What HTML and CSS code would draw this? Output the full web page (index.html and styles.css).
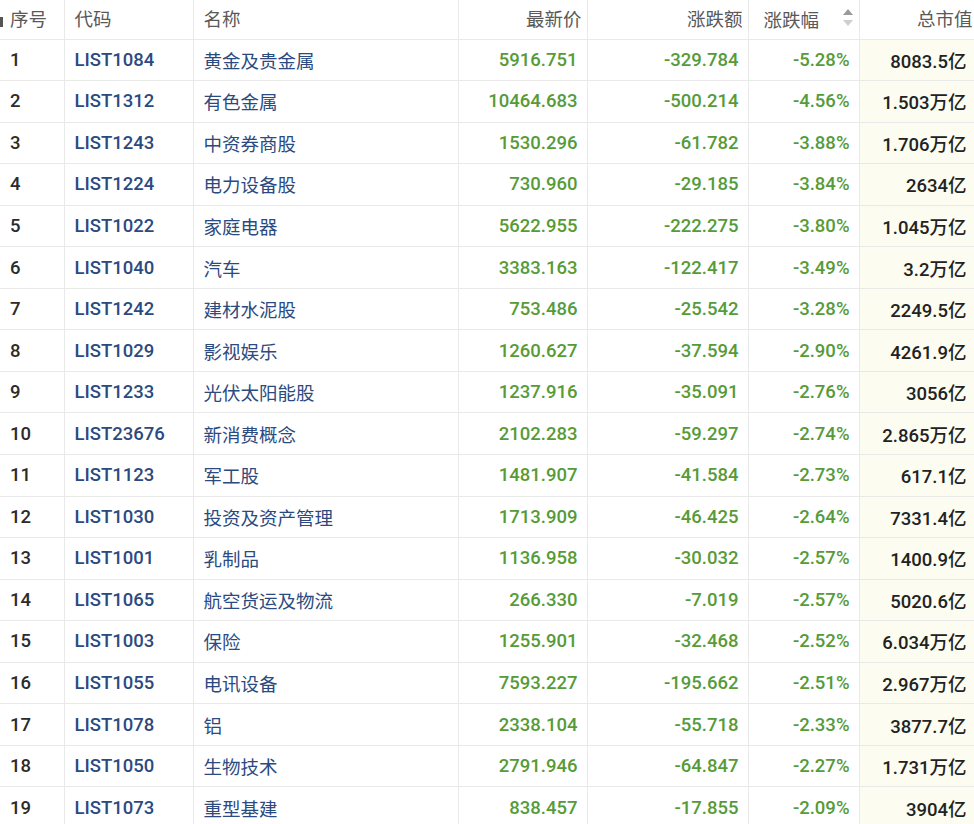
FILE: index.html
```html
<!DOCTYPE html>
<html lang="zh">
<head>
<meta charset="utf-8">
<title>板块行情</title>
<link rel="stylesheet" href="styles.css">
</head>
<body>
<div class="wrap">
<table class="quotes">
<colgroup>
<col class="c-idx"><col class="c-code"><col class="c-name"><col class="c-price"><col class="c-chg"><col class="c-pct"><col class="c-cap">
</colgroup>
<thead>
<tr>
<th class="idx"><span class="cut"></span>序号</th>
<th class="left">代码</th>
<th class="left">名称</th>
<th class="right">最新价</th>
<th class="right">涨跌额</th>
<th class="sortable"><span class="lbl">涨跌幅</span><span class="sort"><i class="up"></i><i class="down"></i></span></th>
<th class="right cap-h">总市值</th>
</tr>
</thead>
<tbody>
<tr><td class="idx">1</td><td class="code">LIST1084</td><td class="name">黄金及贵金属</td><td class="num">5916.751</td><td class="num">-329.784</td><td class="num">-5.28%</td><td class="cap">8083.5亿</td></tr>
<tr><td class="idx">2</td><td class="code">LIST1312</td><td class="name">有色金属</td><td class="num">10464.683</td><td class="num">-500.214</td><td class="num">-4.56%</td><td class="cap">1.503万亿</td></tr>
<tr><td class="idx">3</td><td class="code">LIST1243</td><td class="name">中资券商股</td><td class="num">1530.296</td><td class="num">-61.782</td><td class="num">-3.88%</td><td class="cap">1.706万亿</td></tr>
<tr><td class="idx">4</td><td class="code">LIST1224</td><td class="name">电力设备股</td><td class="num">730.960</td><td class="num">-29.185</td><td class="num">-3.84%</td><td class="cap">2634亿</td></tr>
<tr><td class="idx">5</td><td class="code">LIST1022</td><td class="name">家庭电器</td><td class="num">5622.955</td><td class="num">-222.275</td><td class="num">-3.80%</td><td class="cap">1.045万亿</td></tr>
<tr><td class="idx">6</td><td class="code">LIST1040</td><td class="name">汽车</td><td class="num">3383.163</td><td class="num">-122.417</td><td class="num">-3.49%</td><td class="cap">3.2万亿</td></tr>
<tr><td class="idx">7</td><td class="code">LIST1242</td><td class="name">建材水泥股</td><td class="num">753.486</td><td class="num">-25.542</td><td class="num">-3.28%</td><td class="cap">2249.5亿</td></tr>
<tr><td class="idx">8</td><td class="code">LIST1029</td><td class="name">影视娱乐</td><td class="num">1260.627</td><td class="num">-37.594</td><td class="num">-2.90%</td><td class="cap">4261.9亿</td></tr>
<tr><td class="idx">9</td><td class="code">LIST1233</td><td class="name">光伏太阳能股</td><td class="num">1237.916</td><td class="num">-35.091</td><td class="num">-2.76%</td><td class="cap">3056亿</td></tr>
<tr><td class="idx">10</td><td class="code">LIST23676</td><td class="name">新消费概念</td><td class="num">2102.283</td><td class="num">-59.297</td><td class="num">-2.74%</td><td class="cap">2.865万亿</td></tr>
<tr><td class="idx">11</td><td class="code">LIST1123</td><td class="name">军工股</td><td class="num">1481.907</td><td class="num">-41.584</td><td class="num">-2.73%</td><td class="cap">617.1亿</td></tr>
<tr><td class="idx">12</td><td class="code">LIST1030</td><td class="name">投资及资产管理</td><td class="num">1713.909</td><td class="num">-46.425</td><td class="num">-2.64%</td><td class="cap">7331.4亿</td></tr>
<tr><td class="idx">13</td><td class="code">LIST1001</td><td class="name">乳制品</td><td class="num">1136.958</td><td class="num">-30.032</td><td class="num">-2.57%</td><td class="cap">1400.9亿</td></tr>
<tr><td class="idx">14</td><td class="code">LIST1065</td><td class="name">航空货运及物流</td><td class="num">266.330</td><td class="num">-7.019</td><td class="num">-2.57%</td><td class="cap">5020.6亿</td></tr>
<tr><td class="idx">15</td><td class="code">LIST1003</td><td class="name">保险</td><td class="num">1255.901</td><td class="num">-32.468</td><td class="num">-2.52%</td><td class="cap">6.034万亿</td></tr>
<tr><td class="idx">16</td><td class="code">LIST1055</td><td class="name">电讯设备</td><td class="num">7593.227</td><td class="num">-195.662</td><td class="num">-2.51%</td><td class="cap">2.967万亿</td></tr>
<tr><td class="idx">17</td><td class="code">LIST1078</td><td class="name">铝</td><td class="num">2338.104</td><td class="num">-55.718</td><td class="num">-2.33%</td><td class="cap">3877.7亿</td></tr>
<tr><td class="idx">18</td><td class="code">LIST1050</td><td class="name">生物技术</td><td class="num">2791.946</td><td class="num">-64.847</td><td class="num">-2.27%</td><td class="cap">1.731万亿</td></tr>
<tr><td class="idx">19</td><td class="code">LIST1073</td><td class="name">重型基建</td><td class="num">838.457</td><td class="num">-17.855</td><td class="num">-2.09%</td><td class="cap">3904亿</td></tr>
</tbody>
</table>
</div>
</body>
</html>
```
FILE: styles.css
```css
html, body {
  margin: 0;
  padding: 0;
  background: #ffffff;
}
.wrap {
  width: 974px;
  height: 824px;
  overflow: hidden;
}
.quotes {
  border-collapse: collapse;
  table-layout: fixed;
  width: 975px;
  font-family: Roboto, "Noto Sans CJK SC", sans-serif;
  font-size: 18.5px;
}
.c-idx { width: 64px; }
.c-code { width: 129px; }
.c-name { width: 265px; }
.c-price { width: 129px; }
.c-chg { width: 161px; }
.c-pct { width: 111px; }
.c-cap { width: 116px; }

.quotes th, .quotes td {
  border: 1px solid #e9e9e9;
  white-space: nowrap;
  overflow: hidden;
  padding: 0;
}
.quotes tr > :first-child { border-left: none; }
.quotes thead th {
  border-top: none;
  height: 39px;
  font-weight: normal;
  color: #595959;
  font-size: 18.5px;
  padding-bottom: 3px;
  box-sizing: border-box;
  font-family: "Noto Sans CJK SC", sans-serif;
}
.quotes th.left { text-align: left; padding-left: 10px; }
.quotes th.right { text-align: right; padding-right: 5px; }
.quotes th.idx { text-align: left; padding-left: 0; }
.cut {
  display: inline-block;
  width: 3px;
  height: 10px;
  background: #555;
  margin-right: 7px;
  vertical-align: -1px;
}
.quotes th.cap-h { padding-right: 2px; }
.quotes th.sortable {
  text-align: left;
  padding-left: 15px;
}
.sortable .lbl { display: inline-block; vertical-align: middle; }
.sort {
  display: inline-flex;
  flex-direction: column;
  gap: 5px;
  vertical-align: middle;
  margin-left: 24px;
  margin-top: -3px;
}
.sort i {
  display: block;
  width: 0;
  height: 0;
  border-left: 5px solid transparent;
  border-right: 5px solid transparent;
}
.sort .up { border-bottom: 6px solid #9a9a9a; }
.sort .down { border-top: 6px solid #cfcfcf; }

.quotes tbody td {
  height: 40.56px;
  font-weight: 500;
}
.quotes td.idx {
  color: #2b2b2b;
  padding-left: 10px;
}
.quotes td.code {
  color: #2b4a80;
  padding-left: 10px;
}
.quotes td.name {
  color: #2b4a80;
  padding-left: 10px;
  font-family: "Noto Sans CJK SC", sans-serif;
  font-size: 18.5px;
  font-weight: normal;
}
.quotes td.num {
  color: #569b38;
  text-align: right;
  padding-right: 9px;
}
.quotes td.cap {
  color: #222222;
  text-align: right;
  padding-right: 8px;
  background: #fcfcf0;
}
```
